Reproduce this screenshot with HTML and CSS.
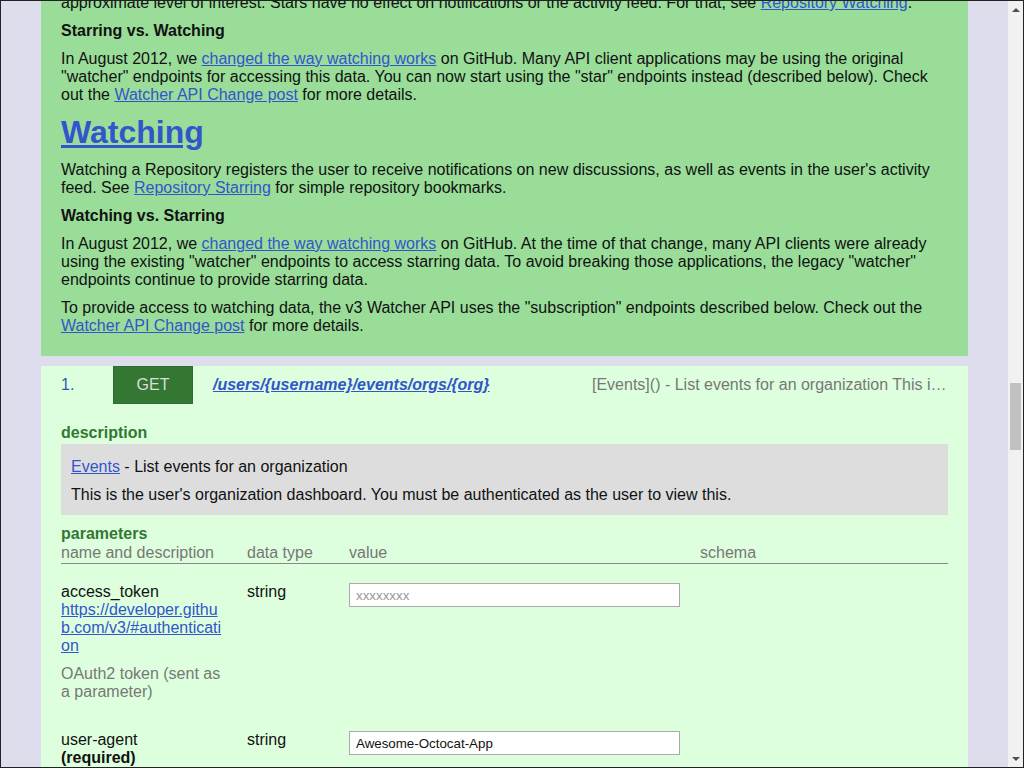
FILE: index.html
```html
<!DOCTYPE html>
<html lang="en">
<head>
<meta charset="utf-8">
<title>Activity API</title>
<link rel="stylesheet" href="styles.css">
</head>
<body>
<div class="frame">
  <main class="page">
    <section class="intro">
      <p>approximate level of interest. Stars have no effect on notifications or the activity feed. For that, see <a href="#">Repository Watching</a>.</p>
      <h3>Starring vs. Watching</h3>
      <p>In August 2012, we <a href="#">changed the way watching works</a> on GitHub. Many API client applications may be using the original "watcher" endpoints for accessing this data. You can now start using the "star" endpoints instead (described below). Check out the <a href="#">Watcher API Change post</a> for more details.</p>
      <h1><a href="#">Watching</a></h1>
      <p>Watching a Repository registers the user to receive notifications on new discussions, as well as events in the user's activity feed. See <a href="#">Repository Starring</a> for simple repository bookmarks.</p>
      <h3>Watching vs. Starring</h3>
      <p>In August 2012, we <a href="#">changed the way watching works</a> on GitHub. At the time of that change, many API clients were already using the existing "watcher" endpoints to access starring data. To avoid breaking those applications, the legacy "watcher" endpoints continue to provide starring data.</p>
      <p>To provide access to watching data, the v3 Watcher API uses the "subscription" endpoints described below. Check out the <a href="#">Watcher API Change post</a> for more details.</p>
    </section>

    <section class="endpoint">
      <div class="ep-head">
        <span class="ep-num">1.</span>
        <span class="ep-method">GET</span>
        <a class="ep-path" href="#">/users/{username}/events/orgs/{org}</a>
        <span class="ep-summary">[Events]() - List events for an organization This is the user's organization dashboard. You must be authenticated as the user to view this.</span>
      </div>

      <div class="label label-desc">description</div>
      <div class="desc-box">
        <p><a href="#">Events</a> - List events for an organization</p>
        <p>This is the user's organization dashboard. You must be authenticated as the user to view this.</p>
      </div>

      <div class="label label-params">parameters</div>
      <div class="params">
        <div class="p-head">name and description</div>
        <div class="p-head">data type</div>
        <div class="p-head">value</div>
        <div class="p-head">schema</div>

        <div class="p-cell p-name">
          <div>access_token</div>
          <a class="p-link" href="#">https://developer.github.com/v3/#authentication</a>
          <p class="p-note">OAuth2 token (sent as a parameter)</p>
        </div>
        <div class="p-cell">string</div>
        <div class="p-cell"><input class="p-input" type="text" placeholder="xxxxxxxx"></div>
        <div class="p-cell"></div>

        <div class="p-cell p-name">
          <div>user-agent</div>
          <strong>(required)</strong>
        </div>
        <div class="p-cell">string</div>
        <div class="p-cell"><input class="p-input" type="text" value="Awesome-Octocat-App"></div>
        <div class="p-cell"></div>
      </div>
    </section>
  </main>

  <div class="scrollbar">
    <div class="sb-btn"><span class="arrow-up"></span></div>
    <div class="sb-track"><div class="sb-thumb"></div></div>
    <div class="sb-btn"><span class="arrow-down"></span></div>
  </div>
</div>
</body>
</html>
```

FILE: styles.css
```css
html, body {
  margin: 0;
  padding: 0;
}

body {
  font-family: "Liberation Sans", Arial, sans-serif;
  font-size: 16px;
  line-height: 18px;
  color: #111;
}

a {
  color: #3355cc;
}

.frame {
  width: 1024px;
  height: 768px;
  box-sizing: border-box;
  border: 1px solid #222;
  display: flex;
  overflow: hidden;
  background: #ddddee;
}

.page {
  flex: 1;
  display: flex;
  flex-direction: column;
  overflow: hidden;
}

.intro {
  margin: -17px 40px 0;
  padding: 0 20px 21px;
  background: #99dd99;
}

.intro p,
.intro h3 {
  margin: 10px 0 0;
  font-size: 16px;
  line-height: 18px;
}

.intro h3 {
  font-weight: bold;
}

.intro h1 {
  margin: 10px 0 0;
  font-size: 32px;
  line-height: 37px;
  font-weight: bold;
}

.endpoint {
  margin: 10px 40px 0;
  padding: 0 20px 20px;
  background: #ddffdd;
  flex: 1;
}

.ep-head {
  display: flex;
  align-items: center;
  height: 38px;
}

.ep-num {
  width: 52px;
  color: #3355bb;
}

.ep-method {
  width: 80px;
  height: 38px;
  box-sizing: border-box;
  border: 1px solid #2f6d2f;
  background: #337733;
  color: #dddddd;
  display: flex;
  align-items: center;
  justify-content: center;
}

.ep-path {
  margin-left: 20px;
  font-weight: bold;
  font-style: italic;
}

.ep-summary {
  margin-left: auto;
  width: 356px;
  color: #777777;
  white-space: nowrap;
  overflow: hidden;
  text-overflow: ellipsis;
}

.label {
  font-weight: bold;
  color: #337733;
}

.label-desc {
  margin-top: 20px;
  margin-bottom: 2px;
}

.desc-box {
  background: #dddddd;
  padding: 14px 10px 11px;
  display: flex;
  flex-direction: column;
  gap: 10px;
}

.desc-box p {
  margin: 0;
}

.label-params {
  margin-top: 10px;
}

.params {
  margin-top: 1px;
  display: grid;
  grid-template-columns: 186px 102px 351px 1fr;
}

.p-head {
  color: #777777;
  padding-bottom: 1px;
  border-bottom: 1px solid #888888;
}

.p-cell {
  padding: 19px 0 11px;
}

.p-name {
  padding-right: 20px;
}

.p-link {
  display: block;
  word-break: break-all;
}

.p-note {
  margin: 10px 0 0;
  color: #777777;
}

.p-input {
  display: block;
  box-sizing: border-box;
  width: 331px;
  height: 24px;
  margin: 0;
  padding: 0 6px;
  border: 1px solid #aaaaaa;
  background: #ffffff;
  font-family: "Liberation Sans", Arial, sans-serif;
  font-size: 13.333px;
  color: #111;
}

.p-input::placeholder {
  color: #999999;
}

.scrollbar {
  width: 15px;
  flex: none;
  background: #f1f1f1;
  display: flex;
  flex-direction: column;
}

.sb-btn {
  height: 17px;
  display: flex;
  align-items: center;
  justify-content: center;
}

.arrow-up {
  width: 0;
  height: 0;
  border-left: 4px solid transparent;
  border-right: 4px solid transparent;
  border-bottom: 4px solid #505050;
}

.arrow-down {
  width: 0;
  height: 0;
  border-left: 4px solid transparent;
  border-right: 4px solid transparent;
  border-top: 4px solid #505050;
}

.sb-track {
  flex: 1;
  padding: 0 2px;
}

.sb-thumb {
  margin-top: 365px;
  height: 67px;
  background: #c1c1c1;
}
```
